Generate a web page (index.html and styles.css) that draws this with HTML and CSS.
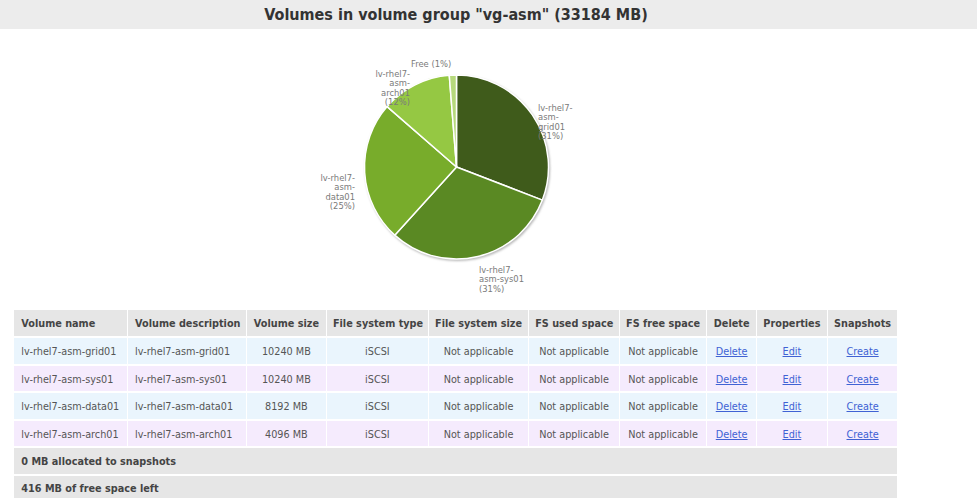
FILE: index.html
```html
<!DOCTYPE html>
<html>
<head>
<meta charset="utf-8">
<title>Volumes</title>
<link rel="stylesheet" href="styles.css">
</head>
<body>
<div class="titlebar"><h1 class="title">Volumes in volume group "vg-asm" (33184 MB)</h1></div>
<div class="page">
  <svg class="pie" width="912" height="280" viewBox="0 0 912 280">
    <defs>
      <filter id="sh" x="-20%" y="-20%" width="140%" height="140%"><feGaussianBlur stdDeviation="1.3"/></filter>
    </defs>
    <circle cx="457.6" cy="139.4" r="92.6" fill="#b8b8b8" filter="url(#sh)"/>
    <g class="slices">
      <path d="M456.5,138 L456.5,46 A92,92 0 0 1 542.34,171.10 Z" fill="#3f5b1b"/>
      <path d="M456.5,138 L542.34,171.10 A92,92 0 0 1 394.72,206.17 Z" fill="#5a8923"/>
      <path d="M456.5,138 L394.72,206.17 A92,92 0 0 1 387.11,77.58 Z" fill="#78ac2b"/>
      <path d="M456.5,138 L387.11,77.58 A92,92 0 0 1 449.27,46.28 Z" fill="#95c843"/>
      <path d="M456.5,138 L449.27,46.28 A92,92 0 0 1 456.5,46 Z" fill="#b6d97c"/>
    </g>
    <g class="labels">
      <text x="538" y="82">lv-rhel7-</text>
      <text x="538" y="91.4">asm-</text>
      <text x="538" y="100.8">grid01</text>
      <text x="538" y="110.2">(31%)</text>

      <text x="479" y="243.7">lv-rhel7-</text>
      <text x="479" y="253.1">asm-sys01</text>
      <text x="479" y="262.5">(31%)</text>

      <text class="end" x="355" y="151.7">lv-rhel7-</text>
      <text class="end" x="355" y="161.1">asm-</text>
      <text class="end" x="355" y="170.5">data01</text>
      <text class="end" x="355" y="179.9">(25%)</text>

      <text class="end" x="410" y="47.7">lv-rhel7-</text>
      <text class="end" x="410" y="57.1">asm-</text>
      <text class="end" x="410" y="66.5">arch01</text>
      <text class="end" x="410" y="75.9">(12%)</text>

      <text x="411" y="37.7">Free (1%)</text>
    </g>
  </svg>
  <table class="volumes">
    <colgroup>
      <col class="c1"><col class="c2"><col class="c3"><col class="c4"><col class="c5">
      <col class="c6"><col class="c7"><col class="c8"><col class="c9"><col class="c10">
    </colgroup>
    <thead>
      <tr>
        <th class="left">Volume name</th>
        <th class="left">Volume description</th>
        <th>Volume size</th>
        <th>File system type</th>
        <th>File system size</th>
        <th>FS used space</th>
        <th>FS free space</th>
        <th>Delete</th>
        <th>Properties</th>
        <th>Snapshots</th>
      </tr>
    </thead>
    <tbody>
      <tr class="blue">
        <td class="left">lv-rhel7-asm-grid01</td>
        <td class="left">lv-rhel7-asm-grid01</td>
        <td>10240 MB</td>
        <td>iSCSI</td>
        <td>Not applicable</td>
        <td>Not applicable</td>
        <td>Not applicable</td>
        <td><a href="#">Delete</a></td>
        <td><a href="#">Edit</a></td>
        <td><a href="#">Create</a></td>
      </tr>
      <tr class="lilac">
        <td class="left">lv-rhel7-asm-sys01</td>
        <td class="left">lv-rhel7-asm-sys01</td>
        <td>10240 MB</td>
        <td>iSCSI</td>
        <td>Not applicable</td>
        <td>Not applicable</td>
        <td>Not applicable</td>
        <td><a href="#">Delete</a></td>
        <td><a href="#">Edit</a></td>
        <td><a href="#">Create</a></td>
      </tr>
      <tr class="blue">
        <td class="left">lv-rhel7-asm-data01</td>
        <td class="left">lv-rhel7-asm-data01</td>
        <td>8192 MB</td>
        <td>iSCSI</td>
        <td>Not applicable</td>
        <td>Not applicable</td>
        <td>Not applicable</td>
        <td><a href="#">Delete</a></td>
        <td><a href="#">Edit</a></td>
        <td><a href="#">Create</a></td>
      </tr>
      <tr class="lilac">
        <td class="left">lv-rhel7-asm-arch01</td>
        <td class="left">lv-rhel7-asm-arch01</td>
        <td>4096 MB</td>
        <td>iSCSI</td>
        <td>Not applicable</td>
        <td>Not applicable</td>
        <td>Not applicable</td>
        <td><a href="#">Delete</a></td>
        <td><a href="#">Edit</a></td>
        <td><a href="#">Create</a></td>
      </tr>
      <tr class="summary">
        <td colspan="10">0 MB allocated to snapshots</td>
      </tr>
      <tr class="summary last">
        <td colspan="10">416 MB of free space left</td>
      </tr>
    </tbody>
  </table>
</div>
</body>
</html>
```

FILE: styles.css
```css
html, body {
  margin: 0;
  padding: 0;
  background: #ffffff;
}

body {
  font-family: "DejaVu Sans", Verdana, sans-serif;
  color: #555555;
}

.titlebar {
  background: #ececec;
  height: 29px;
}

.title {
  width: 912px;
  margin: 0;
  font-family: "DejaVu Sans Condensed", "DejaVu Sans", sans-serif;
  font-stretch: condensed;
  font-weight: bold;
  font-size: 16px;
  line-height: 30px;
  text-align: center;
  color: #333333;
}

.page {
  width: 912px;
}

.pie {
  display: block;
}

.slices path {
  stroke: #ffffff;
  stroke-width: 1.5;
  stroke-linejoin: round;
}

.labels text {
  font-family: "DejaVu Sans", Verdana, sans-serif;
  font-size: 8.4px;
  fill: #7a7a7a;
}

.labels text.end {
  text-anchor: end;
}

.volumes {
  margin: -0.6px 0 0 13.3px;
  border-collapse: separate;
  border-spacing: 1.7px 2px;
  table-layout: fixed;
  width: 885.2px;
  font-size: 9.7px;
}

.c1 { width: 111.7px; }
.c2 { width: 116.7px; }
.c3 { width: 78.3px; }
.c4 { width: 100px; }
.c5 { width: 98.4px; }
.c6 { width: 88.7px; }
.c7 { width: 85.7px; }
.c8 { width: 48.3px; }
.c9 { width: 69px; }
.c10 { width: 69px; }

.volumes th,
.volumes td {
  height: 25.6px;
  padding: 1.5px 6px 0;
  box-sizing: border-box;
  text-align: center;
  vertical-align: middle;
  white-space: nowrap;
  overflow: hidden;
}

.volumes th {
  background: #e6e6e6;
  color: #444444;
  font-weight: bold;
}

.volumes .left {
  text-align: left;
  padding-left: 7px;
}

.blue td {
  background: #eaf5fd;
}

.lilac td {
  background: #f5ebfd;
}

.volumes a {
  color: #4062d4;
  text-decoration: underline;
}

.summary td {
  background: #e6e6e6;
  color: #444444;
  font-weight: bold;
  text-align: left;
  padding-left: 7px;
}

.summary.last td {
  height: 22px;
  vertical-align: top;
  padding-top: 7.5px;
  padding-bottom: 0;
}
```
